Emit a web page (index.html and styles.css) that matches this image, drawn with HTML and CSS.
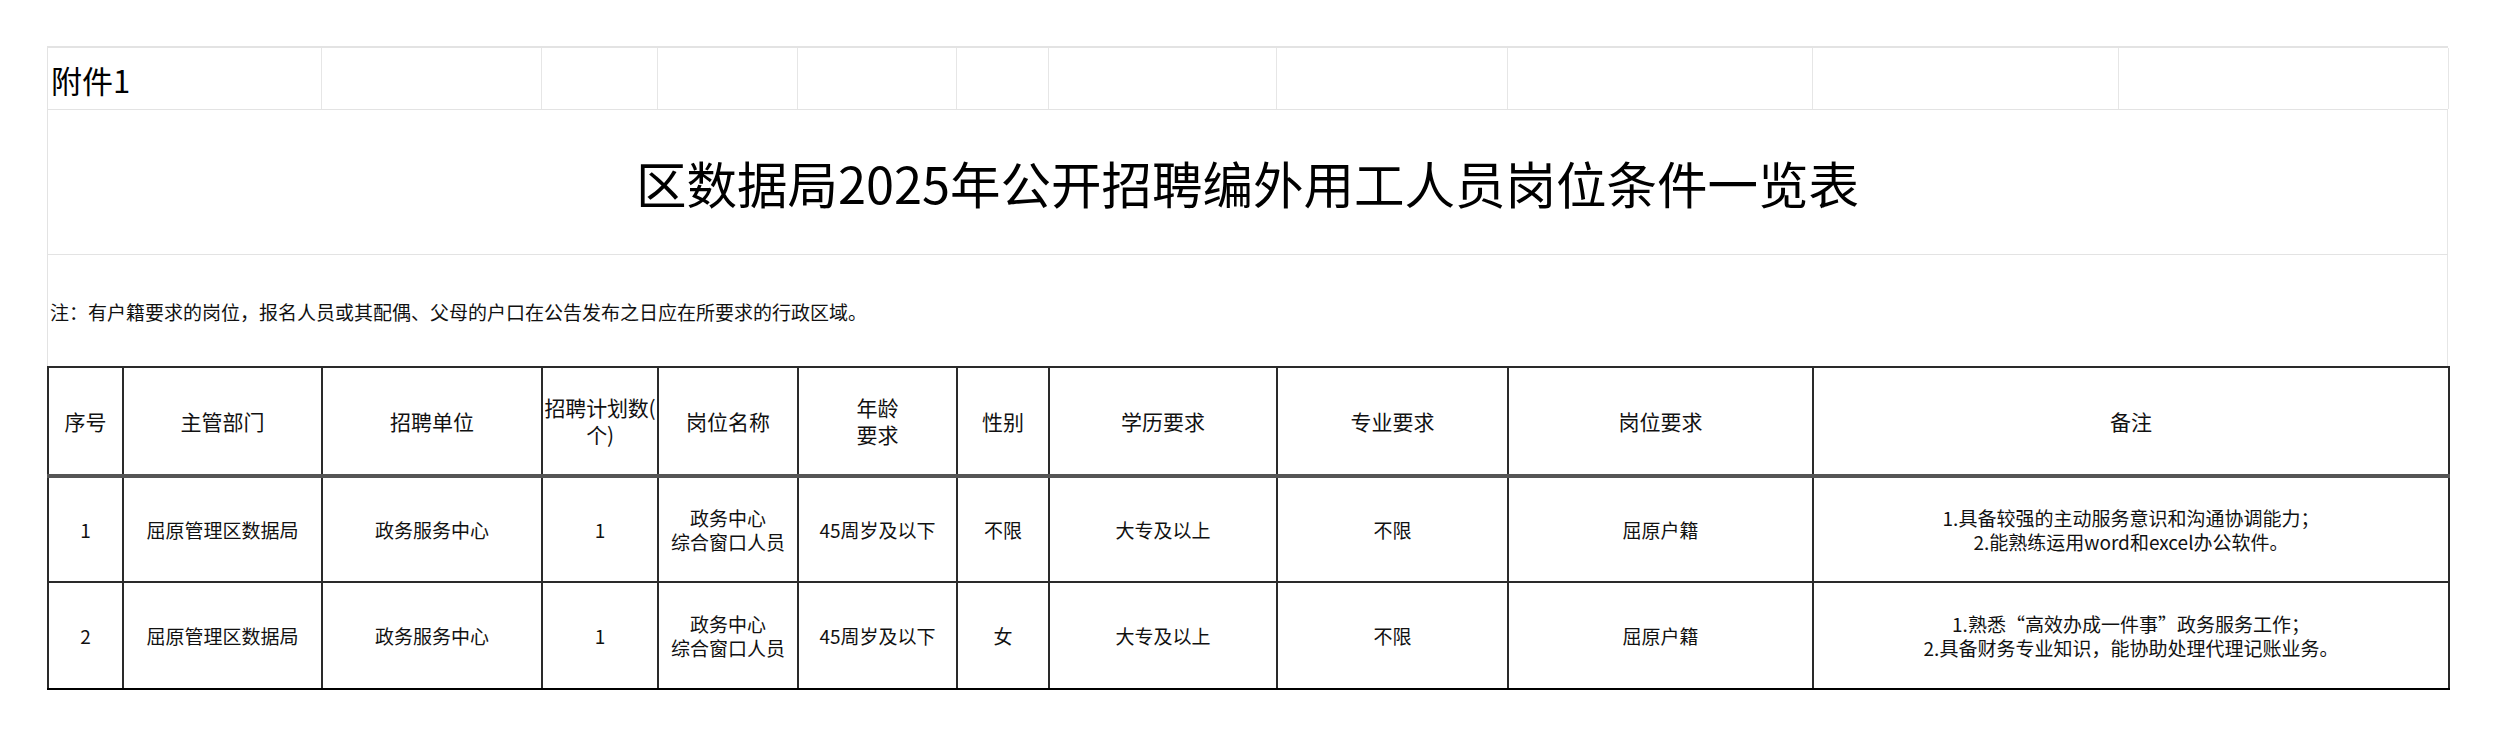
FILE: index.html
```html
<!DOCTYPE html>
<html lang="zh-CN">
<head>
<meta charset="utf-8">
<title>区数据局2025年公开招聘编外用工人员岗位条件一览表</title>
<link rel="stylesheet" href="styles.css">
</head>
<body>
<div class="sheet">
  <div class="top-row">
    <div class="cell attach">附件1</div>
    <div class="cell"></div>
    <div class="cell"></div>
    <div class="cell"></div>
    <div class="cell"></div>
    <div class="cell"></div>
    <div class="cell"></div>
    <div class="cell"></div>
    <div class="cell"></div>
    <div class="cell"></div>
    <div class="cell last"></div>
  </div>
  <div class="title-row">
    <h1 class="title">区数据局2025年公开招聘编外用工人员岗位条件一览表</h1>
  </div>
  <div class="note-row">
    <p class="note">注：有户籍要求的岗位，报名人员或其配偶、父母的户口在公告发布之日应在所要求的行政区域。</p>
  </div>
  <table class="grid">
    <colgroup>
      <col class="c1"><col class="c2"><col class="c3"><col class="c4"><col class="c5"><col class="c6">
      <col class="c7"><col class="c8"><col class="c9"><col class="c10"><col class="c11">
    </colgroup>
    <thead>
      <tr class="head">
        <th>序号</th>
        <th>主管部门</th>
        <th>招聘单位</th>
        <th class="tight">招聘计划数(<br>个)</th>
        <th>岗位名称</th>
        <th>年龄<br>要求</th>
        <th>性别</th>
        <th>学历要求</th>
        <th>专业要求</th>
        <th>岗位要求</th>
        <th>备注</th>
      </tr>
    </thead>
    <tbody>
      <tr class="r1">
        <td>1</td>
        <td>屈原管理区数据局</td>
        <td>政务服务中心</td>
        <td>1</td>
        <td>政务中心<br>综合窗口人员</td>
        <td>45周岁及以下</td>
        <td>不限</td>
        <td>大专及以上</td>
        <td>不限</td>
        <td>屈原户籍</td>
        <td>1.具备较强的主动服务意识和沟通协调能力；<br>2.能熟练运用word和excel办公软件。</td>
      </tr>
      <tr class="r2">
        <td>2</td>
        <td>屈原管理区数据局</td>
        <td>政务服务中心</td>
        <td>1</td>
        <td>政务中心<br>综合窗口人员</td>
        <td>45周岁及以下</td>
        <td>女</td>
        <td>大专及以上</td>
        <td>不限</td>
        <td>屈原户籍</td>
        <td>1.熟悉“高效办成一件事”政务服务工作；<br>2.具备财务专业知识，能协助处理代理记账业务。</td>
      </tr>
    </tbody>
  </table>
</div>
</body>
</html>
```

FILE: styles.css
```css
html, body {
  margin: 0;
  padding: 0;
  background: #ffffff;
}

body {
  font-family: "Noto Sans CJK SC", "Noto Sans", "Liberation Sans", sans-serif;
  color: #111111;
}

.sheet {
  width: 2401px;
  margin: 46px 0 0 47px;
}

.top-row {
  display: grid;
  grid-template-columns: 274px 220px 116px 140px 159px 92px 228px 231px 305px 306px 330px;
  height: 64px;
  box-sizing: border-box;
  border-top: 2px solid #e3e3e3;
  border-left: 1px solid #e3e3e3;
  border-bottom: 1px solid #e3e3e3;
}

.top-row .cell {
  border-right: 1px solid #e6e6e6;
  display: flex;
  align-items: center;
}

.top-row .attach {
  font-size: 31px;
  padding-left: 3px;
  padding-top: 2px;
  color: #000000;
}

.title-row {
  height: 145px;
  box-sizing: border-box;
  border-left: 1px solid #e3e3e3;
  border-right: 1px solid #e6e6e6;
  border-bottom: 1px solid #e3e3e3;
  display: flex;
  align-items: center;
  justify-content: center;
}

.title {
  margin: 0;
  font-size: 50.5px;
  font-weight: 400;
  color: #000000;
  letter-spacing: 0;
}

.note-row {
  height: 111px;
  box-sizing: border-box;
  border-left: 1px solid #e3e3e3;
  border-right: 1px solid #e6e6e6;
  display: flex;
  align-items: center;
}

.note {
  margin: 0;
  padding-left: 2px;
  padding-top: 1px;
  font-size: 19px;
  color: #111111;
}

.grid {
  border-collapse: collapse;
  table-layout: fixed;
  width: 2401px;
  border: 2px solid #000000;
}

.c1 { width: 75px; }
.c2 { width: 199px; }
.c3 { width: 220px; }
.c4 { width: 116px; }
.c5 { width: 140px; }
.c6 { width: 159px; }
.c7 { width: 92px; }
.c8 { width: 228px; }
.c9 { width: 231px; }
.c10 { width: 305px; }
.c11 { width: 636px; }

.grid th,
.grid td {
  border: 2px solid #2a2a2a;
  text-align: center;
  vertical-align: middle;
  padding: 0;
  color: #111111;
}

.grid th {
  font-weight: 400;
  font-size: 21px;
  line-height: 27px;
  height: 106px;
  border-bottom: 4px solid #555555;
}

.grid th.tight {
  font-size: 21px;
  letter-spacing: -0.2px;
}

.grid td {
  font-size: 19px;
  line-height: 24px;
}

.grid .r1 td {
  height: 103px;
  border-top: 4px solid #555555;
}

.grid .r2 td {
  height: 105px;
  border-top: 2px solid #111111;
  border-bottom: 2px solid #000000;
}
```
